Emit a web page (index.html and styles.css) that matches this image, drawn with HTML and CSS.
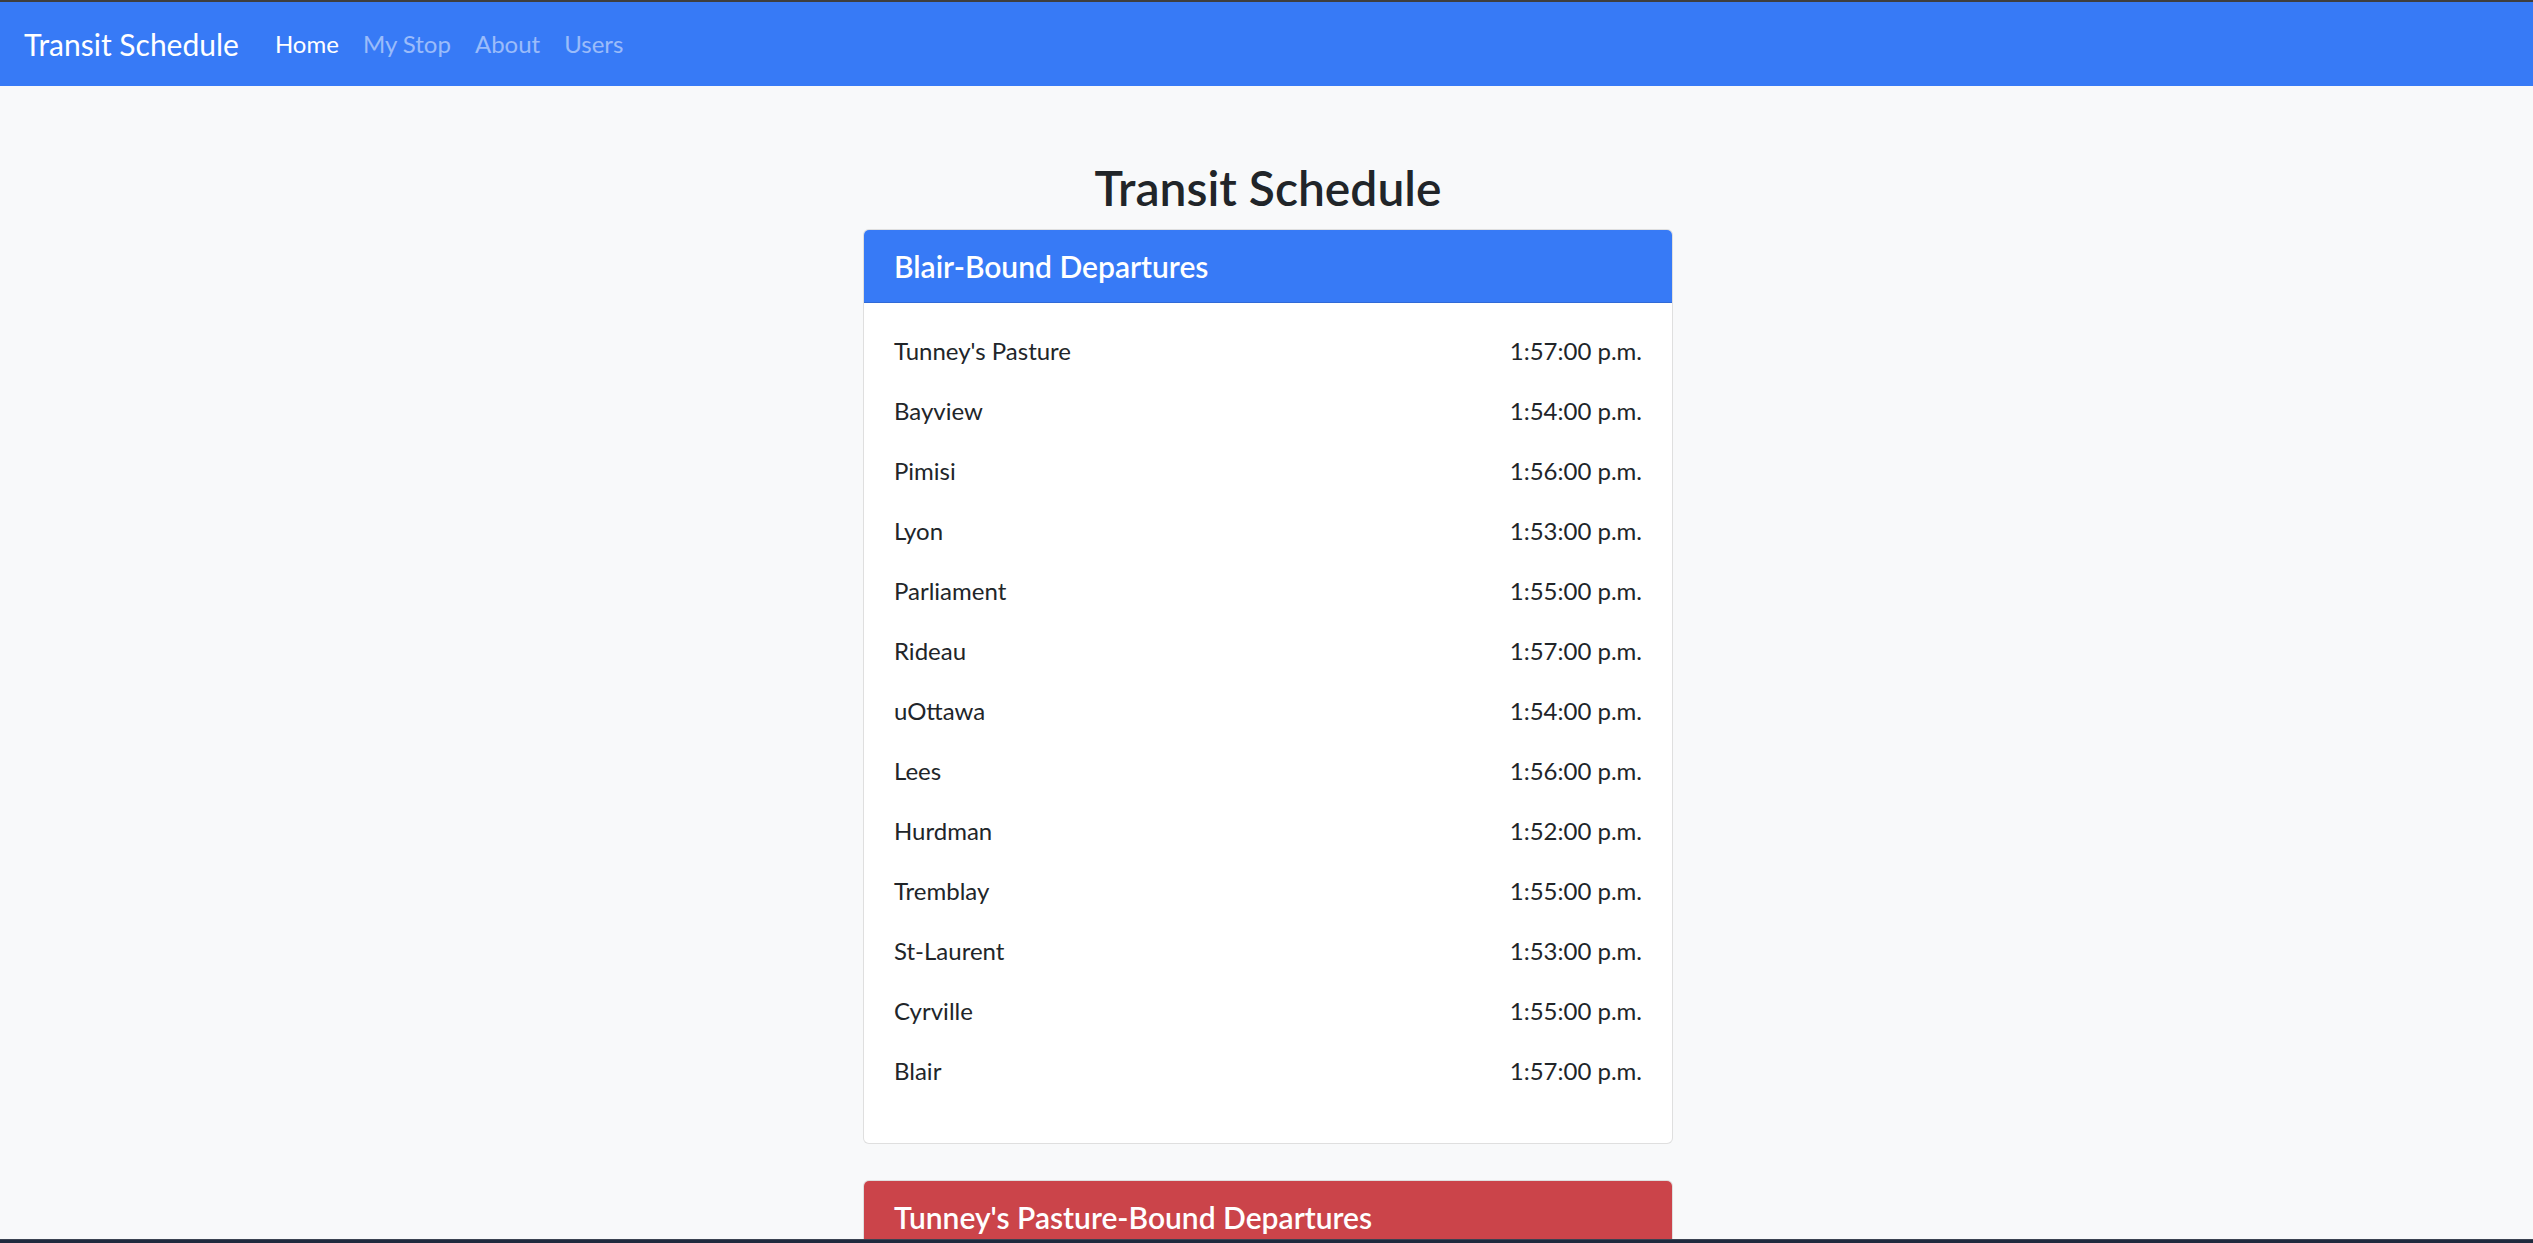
FILE: index.html
```html
<!DOCTYPE html>
<html lang="en">
<head>
<meta charset="utf-8">
<title>Transit Schedule</title>
<link rel="stylesheet" href="styles.css">
</head>
<body>
<nav class="navbar">
  <a class="brand" href="#">Transit Schedule</a>
  <ul class="nav-links">
    <li><a class="nav-link active" href="#">Home</a></li>
    <li><a class="nav-link" href="#">My Stop</a></li>
    <li><a class="nav-link" href="#">About</a></li>
    <li><a class="nav-link" href="#">Users</a></li>
  </ul>
</nav>

<main class="main">
  <h2 class="page-title">Transit Schedule</h2>

  <section class="card">
    <div class="card-header header-blue"><h5 class="card-title">Blair-Bound Departures</h5></div>
    <div class="card-body">
      <div class="row"><span>Tunney's Pasture</span><span>1:57:00 p.m.</span></div>
      <div class="row"><span>Bayview</span><span>1:54:00 p.m.</span></div>
      <div class="row"><span>Pimisi</span><span>1:56:00 p.m.</span></div>
      <div class="row"><span>Lyon</span><span>1:53:00 p.m.</span></div>
      <div class="row"><span>Parliament</span><span>1:55:00 p.m.</span></div>
      <div class="row"><span>Rideau</span><span>1:57:00 p.m.</span></div>
      <div class="row"><span>uOttawa</span><span>1:54:00 p.m.</span></div>
      <div class="row"><span>Lees</span><span>1:56:00 p.m.</span></div>
      <div class="row"><span>Hurdman</span><span>1:52:00 p.m.</span></div>
      <div class="row"><span>Tremblay</span><span>1:55:00 p.m.</span></div>
      <div class="row"><span>St-Laurent</span><span>1:53:00 p.m.</span></div>
      <div class="row"><span>Cyrville</span><span>1:55:00 p.m.</span></div>
      <div class="row"><span>Blair</span><span>1:57:00 p.m.</span></div>
    </div>
  </section>

  <section class="card">
    <div class="card-header header-red"><h5 class="card-title">Tunney's Pasture-Bound Departures</h5></div>
    <div class="card-body">
      <div class="row"><span>Blair</span><span>1:54:00 p.m.</span></div>
      <div class="row"><span>Cyrville</span><span>1:56:00 p.m.</span></div>
      <div class="row"><span>St-Laurent</span><span>1:52:00 p.m.</span></div>
      <div class="row"><span>Tremblay</span><span>1:57:00 p.m.</span></div>
      <div class="row"><span>Hurdman</span><span>1:55:00 p.m.</span></div>
      <div class="row"><span>Lees</span><span>1:53:00 p.m.</span></div>
      <div class="row"><span>uOttawa</span><span>1:56:00 p.m.</span></div>
      <div class="row"><span>Rideau</span><span>1:54:00 p.m.</span></div>
      <div class="row"><span>Parliament</span><span>1:57:00 p.m.</span></div>
      <div class="row"><span>Lyon</span><span>1:55:00 p.m.</span></div>
      <div class="row"><span>Pimisi</span><span>1:53:00 p.m.</span></div>
      <div class="row"><span>Bayview</span><span>1:56:00 p.m.</span></div>
      <div class="row"><span>Tunney's Pasture</span><span>1:54:00 p.m.</span></div>
    </div>
  </section>
</main>

<div class="taskbar-edge"></div>
</body>
</html>
```
FILE: styles.css
```css
html {
  overflow: hidden;
}
body {
  margin: 0;
  border-top: 2px solid #3e3e3e;
  background: #f8f9fa;
  color: #212529;
  font-family: Lato, "Open Sans", sans-serif;
  font-size: 24px;
  line-height: 1.5;
}

/* navbar */
.navbar {
  display: flex;
  align-items: center;
  padding: 12px 24px;
  background: #377af6;
}
.brand {
  color: #fff;
  text-decoration: none;
  font-size: 30px;
  line-height: 45px;
  padding: 7.5px 0;
  margin-right: 24px;
}
.nav-links {
  display: flex;
  list-style: none;
  margin: 0;
  padding: 0;
}
.nav-link {
  display: block;
  padding: 12px 12px;
  color: rgba(255, 255, 255, 0.5);
  text-decoration: none;
  font-size: 24px;
  line-height: 36px;
}
.nav-link.active {
  color: #fff;
}

/* main column */
.main {
  display: flex;
  flex-direction: column;
  align-items: center;
  padding: 73px 0 0 3px;
}
.page-title {
  margin: 0 0 12px;
  font-size: 48px;
  font-weight: 600;
  line-height: 1.2;
}

.card {
  width: 810px;
  box-sizing: border-box;
  background: #fff;
  border: 1px solid rgba(0, 0, 0, 0.125);
  border-radius: 6px;
  margin-bottom: 36px;
  overflow: hidden;
}
.card-header {
  padding: 18px 30px;
  border-bottom: 1px solid rgba(0, 0, 0, 0.125);
  color: #fff;
}
.header-blue {
  background: #377af6;
}
.header-red {
  background: #cb444a;
}
.card-title {
  margin: 0;
  font-size: 30px;
  font-weight: 600;
  line-height: 1.2;
}
.card-body {
  padding: 30px;
}
.row {
  display: flex;
  justify-content: space-between;
  line-height: 36px;
  margin-bottom: 24px;
}

.taskbar-edge {
  position: fixed;
  left: 0;
  right: 0;
  bottom: 0;
  height: 3px;
  border-top: 1px solid #3b4352;
  background: #1e2a3e;
}
```
